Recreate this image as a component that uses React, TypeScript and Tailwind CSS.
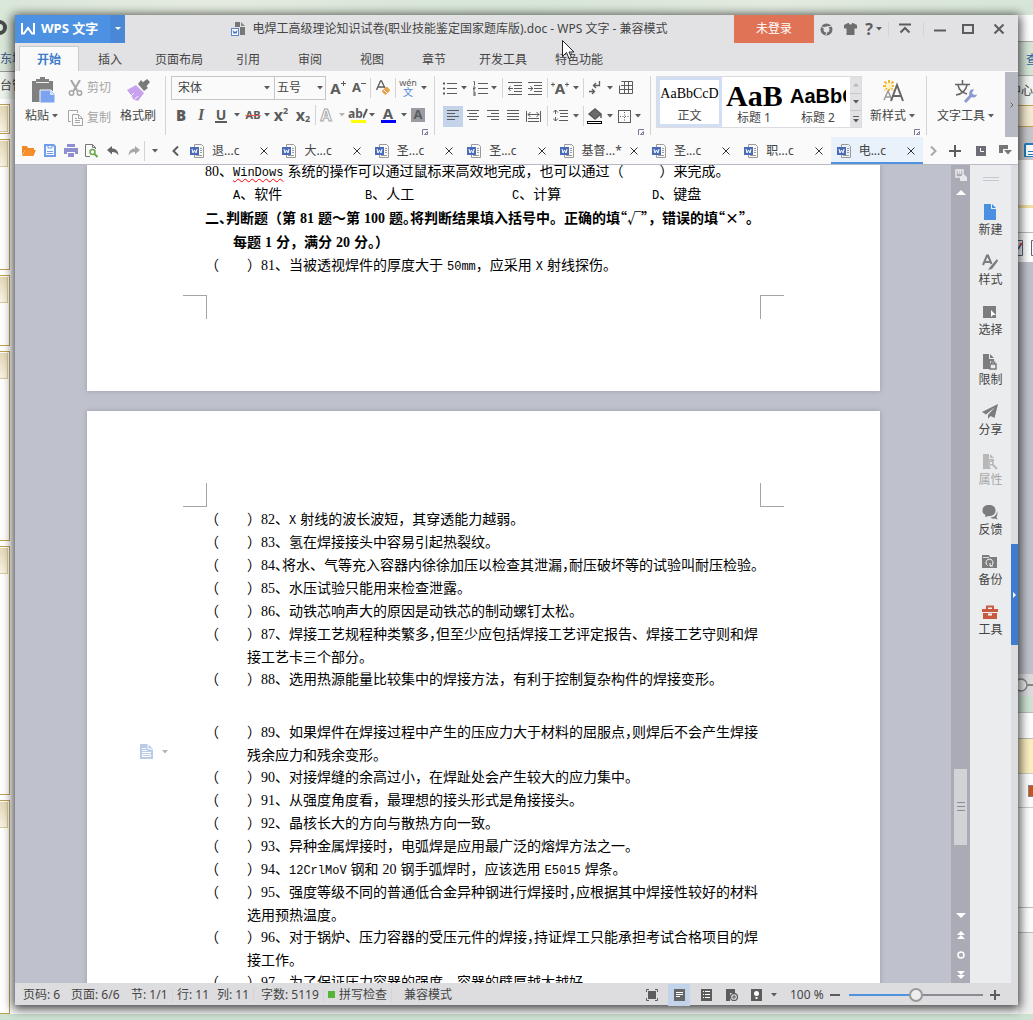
import React from 'react';
import clsx from 'clsx';

const ribbonTabs = ['插入', '页面布局', '引用', '审阅', '视图', '章节', '开发工具', '特色功能'];

const docTabs = [
  { name: '退...c' },
  { name: '大...c' },
  { name: '圣...c' },
  { name: '圣...c' },
  { name: '基督...', dirty: true },
  { name: '圣...c' },
  { name: '职...c' },
  { name: '电...c', active: true },
];

interface Question {
  text: string;
  more?: string;
  gap?: boolean;
  marker?: boolean;
}

// {x} sets a punctuation mark at half width
const questions: Question[] = [
  { text: '82、X射线的波长波短，其穿透能力越弱。' },
  { text: '83、氢在焊接接头中容易引起热裂纹。' },
  { text: '84{、}将水、气等充入容器内徐徐加压以检查其泄漏{，}耐压破坏等的试验叫耐压检验。' },
  { text: '85、水压试验只能用来检查泄露。' },
  { text: '86、动铁芯响声大的原因是动铁芯的制动螺钉太松。' },
  { text: '87、焊接工艺规程种类繁多{，}但至少应包括焊接工艺评定报告、焊接工艺守则和焊', more: '接工艺卡三个部分。' },
  { text: '88、选用热源能量比较集中的焊接方法，有利于控制复杂构件的焊接变形。' },
  { text: '89、如果焊件在焊接过程中产生的压应力大于材料的屈服点{，}则焊后不会产生焊接', more: '残余应力和残余变形。', gap: true, marker: true },
  { text: '90、对接焊缝的余高过小，在焊趾处会产生较大的应力集中。' },
  { text: '91、从强度角度看，最理想的接头形式是角接接头。' },
  { text: '92、晶核长大的方向与散热方向一致。' },
  { text: '93、异种金属焊接时，电弧焊是应用最广泛的熔焊方法之一。' },
  { text: '94、12CrlMoV钢和20钢手弧焊时，应该选用E5015焊条。' },
  { text: '95、强度等级不同的普通低合金异种钢进行焊接时{，}应根据其中焊接性较好的材料', more: '选用预热温度。' },
  { text: '96、对于锅炉、压力容器的受压元件的焊接{，}持证焊工只能承担考试合格项目的焊', more: '接工作。' },
  { text: '97、为了保证压力容器的强度，容器的壁厚越大越好。' },
];

const isHan = (ch?: string) => !!ch && /[\u4e00-\u9fff]/.test(ch);

function Rich({ text }: { text: string }) {
  const parts = text.split(/(\{.\}|[A-Za-z0-9]+)/).filter(Boolean);
  return (
    <>
      {parts.map((p, i) => {
        if (p[0] === '{') {
          return <span key={i} className="[font-feature-settings:'halt']">{p[1]}</span>;
        }
        if (/^[A-Za-z0-9]/.test(p)) {
          return (
            <span
              key={i}
              className={clsx(
                /^\d+$/.test(p) ? "font-['Liberation_Serif',serif]" : "font-['Liberation_Mono',monospace] text-xs",
                isHan(parts[i - 1]?.slice(-1)) && 'ml-1',
                isHan(parts[i + 1]?.[0]) && 'mr-1',
              )}
            >
              {p}
            </span>
          );
        }
        return <React.Fragment key={i}>{p}</React.Fragment>;
      })}
    </>
  );
}

function Blank({ wide }: { wide?: boolean }) {
  return <>（<span className={clsx('inline-block', wide ? 'w-9' : 'w-7')} />）</>;
}

function Caret({ className = 'w-2', light }: { className?: string; light?: boolean }) {
  return (
    <span className={clsx('flex shrink-0 items-center justify-center', className)}>
      <svg width="6" height="4" viewBox="0 0 6 4" fill={light ? '#b5b5b5' : '#5c5c5c'}><path d="M0 0h6L3 3.5z" /></svg>
    </span>
  );
}

function Tool({ label, className = 'w-5', children }: { label: string; className?: string; children: React.ReactNode }) {
  return (
    <button aria-label={label} className={clsx('flex h-5 shrink-0 items-center justify-center text-[#5c5c5c]', className)}>
      {children}
    </button>
  );
}

function Sep({ className = 'h-5' }: { className?: string }) {
  return <span className={clsx('w-px shrink-0 bg-[#d4d4d8]', className)} />;
}

function Icon({ w = 16, h = 16, className, children }: { w?: number; h?: number; className?: string; children: React.ReactNode }) {
  return (
    <svg width={w} height={h} viewBox={`0 0 ${w} ${h}`} fill="none" stroke="currentColor" strokeWidth="1" className={clsx('shrink-0', className)} aria-hidden="true">
      {children}
    </svg>
  );
}

function Launcher() {
  return (
    <button aria-label="更多设置" className="absolute right-1.5 bottom-0 text-[#7a7a9a]">
      <Icon w={6} h={6}><path d="M.5 6V.5H6M2.5 5.5h3v-3z" /></Icon>
    </button>
  );
}

function Lines({ rows }: { rows: [number, number][] }) {
  return (
    <Icon w={14} h={14}>
      {rows.map(([x, w], i) => <path key={i} d={`M${x} ${i * 3 + 1.5}h${w}`} />)}
    </Icon>
  );
}

function DocIcon() {
  return (
    <Icon w={14} h={14}>
      <path d="M4.5 3V.5h7l2 2v11h-9V11" stroke="#9a9a9a" />
      <path d="M10 4.500h2M10 6.500h2M10 8.500h2M6 11.500h6" stroke="#9a9a9a" />
      <rect x="0" y="3" width="9" height="8" fill="#4a6cb8" stroke="none" />
      <path d="M2 5l1 4 1.500-3L6 9l1-4" stroke="#fff" />
    </Icon>
  );
}

function TitleBar() {
  return (
    <header className="flex h-7 shrink-0 items-stretch">
      <button className="flex w-[95px] items-center bg-[#4d91e2] pl-1.5 text-[13px] font-bold text-white">
        <Icon w={14} h={12} className="mr-1.5"><path d="M1 0v10.500h2L7 5l4 5.500h2V0" strokeWidth="2" /></Icon>
        WPS 文字
      </button>
      <button aria-label="应用菜单" className="flex w-[15px] items-center justify-center bg-[#4888d4]">
        <svg width="6" height="4" fill="#fff"><path d="M0 0h6L3 3z" /></svg>
      </button>
      <div className="flex min-w-0 flex-1 items-center justify-center gap-1.5 pl-10">
        <Icon w={15} h={14}>
          <path d="M4 0h5v5h5v8H9V5H4z" fill="#777" stroke="none" />
          <path d="M10 0l4 4h-4z" fill="#888" stroke="none" />
          <rect x=".5" y="6.500" width="7" height="7" fill="#fff" stroke="#5b83c8" />
          <path d="M2 8.500l1 3 1-2 1 2 1-3" stroke="#3e6fc4" />
        </Icon>
        <h1 className="truncate">电焊工高级理论知识试卷(职业技能鉴定国家题库版).doc - WPS 文字 - 兼容模式</h1>
      </div>
      <button className="w-20 shrink-0 bg-[#e07356] text-white">未登录</button>
      <div className="flex shrink-0 items-center text-[#6a6a6a]">
        <Tool label="账号" className="w-6">
          <Icon w={13} h={13}><circle cx="6.500" cy="6.500" r="4.500" stroke="#6e6e6e" strokeWidth="3" /><path d="M1 3.500l5 2M12 3l-5 1M6 12l1-4" stroke="#e2e2e5" /></Icon>
        </Tool>
        <Tool label="皮肤" className="w-6">
          <Icon w={13} h={12}><path d="M4 0h1c0 2 3 2 3 0h1l4 2v3.500h-2.500V12h-8V5.500H0V2z" fill="#6e6e6e" stroke="none" /></Icon>
        </Tool>
        <Tool label="帮助" className="w-6 gap-0.5"><span className="text-base font-bold">?</span><Caret /></Tool>
        <Sep className="ml-0.5 h-3.5 bg-[#b0b0b4]" />
        <Tool label="折叠功能区" className="w-8"><Icon w={12} h={12}><path d="M0 1.500h12M1.500 9.500L6 5l4.500 4.500" strokeWidth="2" /></Icon></Tool>
        <Sep className="ml-0.5 h-3.5 bg-[#b0b0b4]" />
        <Tool label="最小化" className="w-8"><Icon w={12} h={12}><path d="M0 7.500h12" strokeWidth="2" /></Icon></Tool>
        <Tool label="最大化" className="w-6"><Icon w={12} h={10}><rect x="1" y="1" width="10" height="8" strokeWidth="2" /></Icon></Tool>
        <Tool label="关闭" className="w-[38px]"><Icon w={10} h={10}><path d="M.5.5l9 9M9.500.5l-9 9" strokeWidth="2" /></Icon></Tool>
      </div>
    </header>
  );
}

function RibbonTabs() {
  return (
    <nav className="flex h-7 shrink-0 items-end pl-1">
      <button className="h-[25px] w-[60px] border border-b-0 border-[#c9cacd] bg-[#fafafa] pt-0.5 font-bold text-[#3c7cc8]">开始</button>
      {ribbonTabs.map((t) => (
        <button key={t} className={clsx('h-[25px] shrink-0 pt-0.5', t.length > 2 ? 'w-[76px]' : 'w-[62px]')}>{t}</button>
      ))}
    </nav>
  );
}

function ClipboardGroup() {
  return (
    <section className="flex h-full w-[151px] shrink-0 border-r border-[#d4d4d8] pl-[9px]">
      <button className="flex w-9 flex-col items-center">
        <Icon w={26} h={28}>
          <path d="M3 5h4V3h4V1h5v2h4v2h4v10H12v11H3z" fill="#808080" stroke="none" />
          <path d="M7 6.500h13" stroke="#eee" />
          <path d="M11 14h11l4 4v9H11z" fill="#7ba3ee" stroke="#fafafa" />
          <path d="M21 14v5h5" fill="#d5e2fb" stroke="none" />
        </Icon>
        <span className="mt-1 flex items-center gap-0.5 whitespace-nowrap leading-4">粘贴<Caret /></span>
      </button>
      <div className="ml-2 flex w-12 flex-col text-[#a5a5a5]">
        <button className="flex h-6 items-center gap-1">
          <Icon w={15} h={16}><path d="M3 0l6.500 11M12 0L5.500 11" strokeWidth="2" /><circle cx="3.500" cy="13" r="2.200" strokeWidth="1.500" /><circle cx="11.500" cy="13" r="2.200" strokeWidth="1.500" /></Icon>
          <span className="whitespace-nowrap">剪切</span>
        </button>
        <button className="mt-1 flex h-7 items-center gap-1">
          <Icon w={15} h={16}><path d="M3 11.500H.5V.5h9V3M4.500 4.500h6l4 4v7h-10zM10.500 4.500v4h4M7 8.500h2M7 10.500h5M7 12.500h5" /></Icon>
          <span className="whitespace-nowrap">复制</span>
        </button>
      </div>
      <button className="ml-0.5 flex w-10 flex-col items-center">
        <Icon w={24} h={28}>
          <path d="M16 7l5-4 3 3-5 6z" fill="#777" stroke="none" />
          <path d="M12 8l3-4 7 8-4 3z" fill="#7b7b7b" stroke="none" />
          <path d="M1 14l9-5 8 8-6 8-3-1-2-1-2-4z" fill="#c9a2ef" stroke="none" />
          <path d="M5 20l3-3M9 23l3-3" stroke="#fafafa" />
        </Icon>
        <span className="mt-1 whitespace-nowrap leading-4">格式刷</span>
      </button>
    </section>
  );
}

function FontGroup() {
  return (
    <section className="relative flex h-full w-[269px] shrink-0 flex-col border-r border-[#d4d4d8] pl-[5px]">
      <div className="flex h-6 items-center">
        <span className="relative flex h-6 w-[104px] items-center border border-[#c6c6ca]">
          <select aria-label="字体" className="h-full w-full appearance-none bg-transparent pl-1.5 outline-none"><option>宋体</option></select>
          <Caret className="absolute right-1" />
        </span>
        <span className="relative -ml-px flex h-6 w-[52px] items-center border border-[#c6c6ca]">
          <select aria-label="字号" className="h-full w-full appearance-none bg-transparent pl-0.5 outline-none"><option>五号</option></select>
          <Caret className="absolute right-0.5" />
        </span>
        <Tool label="增大字号" className="ml-0.5 w-5"><b className="text-[15px]">A</b><Icon w={5} h={14}><path d="M0 2.500h5M2.500 0v5" /></Icon></Tool>
        <Tool label="减小字号" className="w-[22px]"><b className="text-[13px]">A</b><Icon w={5} h={14}><path d="M0 2.500h5" /></Icon></Tool>
        <Sep />
        <Tool label="清除格式" className="w-6">
          <Icon w={15} h={16}><path d="M.5 10L4.500 1h1L9 8M2 7h6" strokeWidth="1.300" /><rect x="6.500" y="8" width="7" height="5.500" rx="1" transform="rotate(-45 10 10.800)" fill="#e9a24c" stroke="none" /><path d="M7.500 9.500l4 4" stroke="#fff" /></Icon>
        </Tool>
        <Sep />
        <Tool label="拼音指南" className="w-6 flex-col"><span className="text-[9px] leading-[9px]">wén</span><span className="text-[10px] leading-[11px] text-[#4a86d8]">文</span></Tool>
        <Caret />
      </div>
      <div className="mt-[5px] flex h-5 items-center">
        <Tool label="加粗"><b className="text-[15px] font-black">B</b></Tool>
        <Tool label="倾斜"><i className="font-['Liberation_Serif',serif] text-base font-bold">I</i></Tool>
        <Tool label="下划线"><span className="border-b-2 border-[#5c5c5c] px-px text-sm leading-[13px] font-bold">U</span></Tool>
        <Caret className="w-3" />
        <Tool label="删除线"><span className="text-[11px] font-bold line-through decoration-[#e25b4a] decoration-1">AB</span></Tool>
        <Caret />
        <Tool label="上标"><b className="text-base">x</b><span className="-mt-2 text-[9px] font-bold">2</span></Tool>
        <Tool label="下标" className="w-6"><b className="text-base">x</b><span className="mt-2 text-[9px] font-bold">2</span></Tool>
        <Sep />
        <Tool label="文字效果"><b className="text-base text-white [-webkit-text-stroke:1px_#a9a9a9]">A</b></Tool>
        <Caret className="w-3" light />
        <Tool label="突出显示">
          <span className="flex flex-col items-center">
            <span className="flex h-3 items-end text-xs leading-3 font-bold">ab<Icon w={5} h={12}><path d="M0 10l4-9" strokeWidth="2" /></Icon></span>
            <span className="h-[3px] w-[15px] bg-[#ffff00]" />
          </span>
        </Tool>
        <Caret />
        <Tool label="字体颜色" className="w-6">
          <span className="flex flex-col items-center">
            <b className="text-[15px] leading-[13px]">A</b>
            <span className="h-[3px] w-[15px] bg-[#0000ff]" />
          </span>
        </Tool>
        <Caret />
        <Tool label="字符底纹"><b className="flex size-3.5 items-center justify-center bg-[#9c9ca4] text-[13px]">A</b></Tool>
      </div>
      <Launcher />
    </section>
  );
}

function ParagraphGroup() {
  return (
    <section className="relative flex h-full w-[216px] shrink-0 flex-col border-r border-[#d4d4d8] pl-[5px]">
      <div className="flex h-6 items-center">
        <Tool label="项目符号"><Icon w={14} h={14}><path d="M4 2.500h10M4 7.500h10M4 12.500h10M0 2.500h2M0 7.500h2M0 12.500h2" /><path d="M1 1.500v2M1 6.500v2M1 11.500v2" strokeWidth="2" /></Icon></Tool>
        <Caret />
        <Tool label="编号" className="ml-0.5 w-5"><Icon w={15} h={15}><path d="M5 2.500h10M5 7.500h10M5 12.500h10M.5.5h1v4M0 6h2v1.500H0V9h2M0 11h2v4H0M0 13h2" /></Icon></Tool>
        <Caret />
        <Sep className="ml-1 h-5" />
        <Tool label="减少缩进" className="w-6"><Icon w={14} h={14}><path d="M0 1.500h14M6 4.500h8M6 7.500h8M6 10.500h8M0 13.500h14M0 7.500h5M2.500 5L.5 7.500l2 2.500" /></Icon></Tool>
        <Tool label="增加缩进" className="w-4"><Icon w={14} h={14}><path d="M0 1.500h14M6 4.500h8M6 7.500h8M6 10.500h8M0 13.500h14M0 7.500h5M2.500 5l2 2.500-2 2.500" /></Icon></Tool>
        <Sep className="ml-1 h-5" />
        <Tool label="中文版式" className="w-6"><Icon w={4} h={14}><path d="M0 3.500h4M2 1.500v4" /></Icon><b className="text-[15px]">A</b><Icon w={4} h={14}><path d="M0 3.500h4M2 1.500v4" /></Icon></Tool>
        <Caret />
        <Sep className="ml-[3px] h-5" />
        <Tool label="显示段落标记" className="w-[22px]"><Icon w={12} h={14}><path d="M10.500 0v4.500H5M7 2L4.500 4.500 7 7M0 10.500h5M3 8l2.500 2.500L3 13" strokeWidth="1.300" /></Icon></Tool>
        <Caret />
        <Tool label="表格" className="w-6"><Icon w={14} h={14}><path d="M2.500.5h11v12H.5v-8M5.500 0v13M9.500 0v13M2 4.500h12M0 8.500h14" /></Icon></Tool>
      </div>
      <div className="mt-1.5 flex h-5 items-center">
        <button aria-label="左对齐" className="ml-[3px] flex h-[21px] w-5 items-center justify-center bg-[#c3d3ea] text-[#5c5c5c]"><Lines rows={[[1, 12], [1, 8], [1, 12], [1, 8]]} /></button>
        <Tool label="居中对齐"><Lines rows={[[1, 12], [3, 8], [1, 12], [3, 8]]} /></Tool>
        <Tool label="右对齐"><Lines rows={[[1, 12], [5, 8], [1, 12], [5, 8]]} /></Tool>
        <Tool label="两端对齐"><Lines rows={[[1, 12], [1, 12], [1, 12], [1, 12]]} /></Tool>
        <Tool label="分散对齐"><Icon w={15} h={13}><path d="M.5 1v11M14.500 1v11M2 4.500h11M4.500 2L2 4.500 4.500 7M10.500 2L13 4.500 10.500 7M2 8.500h11M2 11.500h11" /></Icon></Tool>
        <Sep className="ml-1 h-5" />
        <Tool label="行距" className="w-6"><Icon w={15} h={14}><path d="M6 1.500h9M7 4.500h8M7 7.500h8M6 11.500h9M2.500 1v4M2.500 8v4M0 3.500L2.500 1 5 3.500M0 9.500L2.500 12 5 9.500" /></Icon></Tool>
        <Caret />
        <Sep className="ml-[3px] h-5" />
        <Tool label="底纹颜色" className="w-[22px]"><Icon w={16} h={16}><path d="M2 6l6-5 6 5-6 5zM14 6v4" fill="#6b6b6b" strokeWidth="1.500" /><rect x=".5" y="13.500" width="14" height="2" stroke="#000" fill="#fff" /></Icon></Tool>
        <Caret />
        <Tool label="边框"><Icon w={13} h={13}><rect x=".5" y=".5" width="12" height="12" /><path d="M6.500 2v9M2 6.500h9" strokeDasharray="1 1.500" /></Icon></Tool>
        <Caret />
      </div>
      <Launcher />
    </section>
  );
}

function StylesGroup() {
  return (
    <section className="relative flex h-full w-[276px] shrink-0 border-r border-[#d4d4d8] pl-[5px]">
      <div className="flex h-[52px] w-[206px] border border-[#dcdce0] bg-white">
        <button className="w-[65px] border-3 border-[#d2def3]">
          <span className="block h-7 overflow-hidden font-['Liberation_Serif',serif] text-sm leading-7 text-black">AaBbCcD</span>
          <span className="block leading-4">正文</span>
        </button>
        <button className="w-16 px-1">
          <span className="block h-8 overflow-hidden text-left font-['Liberation_Serif',serif] text-[30px] leading-9 font-bold text-black">AaBb</span>
          <span className="block leading-4">标题 1</span>
        </button>
        <button className="w-16 px-1">
          <span className="block h-8 overflow-hidden text-left font-['Liberation_Sans',sans-serif] text-xl leading-9 font-bold text-black">AaBbC</span>
          <span className="block leading-4">标题 2</span>
        </button>
        <div className="flex flex-1 flex-col divide-y divide-[#c8c8cc] bg-[#e2e2e5]">
          <button aria-label="上一行样式" className="flex flex-1 items-center justify-center"><svg width="6" height="4" fill="#b8b8b8"><path d="M0 3.500h6L3 0z" /></svg></button>
          <button aria-label="下一行样式" className="flex flex-1 items-center justify-center"><Caret /></button>
          <button aria-label="全部样式" className="flex flex-1 flex-col items-center justify-center gap-0.5"><span className="h-px w-1.5 bg-[#5c5c5c]" /><Caret /></button>
        </div>
      </div>
      <button className="ml-2 flex flex-col items-center">
        <span className="flex h-8 items-center text-[#666]">
          <Icon w={26} h={26}>
            <path d="M9 1v12M3 7h12M4.500 2.500l9 9M13.500 2.500l-9 9" stroke="#f2b632" strokeWidth="2" strokeDasharray="3 1" />
            <circle cx="9" cy="7" r="3" fill="#fff4c2" stroke="none" />
            <path d="M4 21l4-9 4 9M5.500 18h5" stroke="#9b9b9b" strokeWidth="1.500" />
            <path d="M11 22l6-16 6 16M13.500 17h7" strokeWidth="2" />
          </Icon>
        </span>
        <span className="flex items-center gap-0.5 leading-4">新样式<Caret /></span>
      </button>
      <Launcher />
    </section>
  );
}

function Ribbon() {
  return (
    <div className="flex h-[66px] shrink-0 items-stretch bg-[#fafafa]">
      <div className="flex min-w-0 flex-1 overflow-hidden pt-[5px] pb-0.5">
        <ClipboardGroup />
        <FontGroup />
        <ParagraphGroup />
        <StylesGroup />
        <button className="flex flex-1 flex-col items-center">
          <span className="flex h-8 items-center text-[#666]">
            <Icon w={24} h={24}>
              <path d="M1 4.500h15M8.500 0v4M13 5c-1 5-5 9-11 10M4 5c1 5 5 8 9 9" strokeWidth="1.500" />
              <path d="M11 22l6-6.500" stroke="#8c9bd0" strokeWidth="3" />
              <path d="M20 9.500a4 4 0 1 0 3 5l-3 .5-2-2z" fill="#8c9bd0" stroke="none" />
            </Icon>
          </span>
          <span className="flex items-center gap-0.5 whitespace-nowrap leading-4">文字工具<Caret /></span>
        </button>
      </div>
      <button aria-label="向右滚动" className="mt-px flex w-[13px] shrink-0 items-center justify-center bg-[#b7b9c3] text-[#666]">
        <Icon w={4} h={6}><path d="M.5.5L3 3 .5 5.500" /></Icon>
      </button>
    </div>
  );
}

function DocumentBar() {
  return (
    <div className="flex h-7 shrink-0 items-stretch border-b border-[#b9bac6] bg-[#fafafa]">
      <div className="flex w-[169px] shrink-0 items-center pl-[3px]">
        <Tool label="打开" className="w-[21px]"><Icon w={14} h={12}><path d="M0 1h5l1 2h6v2H3l-3 5z" fill="#f08a28" stroke="none" /><path d="M3 5h11l-2.500 6H0z" fill="#f5902c" stroke="none" /></Icon></Tool>
        <Tool label="保存" className="w-[21px] text-[#6f9ceb]"><Icon w={12} h={13}><path d="M1 1h8.500L11 2.500V12H1z" strokeWidth="2" /><path d="M4 1v3h4V1M3 7.500h6M3 9.500h6" /></Icon></Tool>
        <Tool label="打印" className="w-[21px] text-[#8f8fd0]"><Icon w={14} h={13}><path d="M3 0h8v3H3zM0 4h14v6h-3V8H3v2H0zM4 9h6v4H4z" fill="currentColor" stroke="none" /></Icon></Tool>
        <Tool label="打印预览" className="w-[21px]"><Icon w={13} h={14}><path d="M5 12.500H.5V.5h7l3 3V5M7.500.5v3h3" stroke="#777" /><circle cx="7.500" cy="8" r="2.500" stroke="#6aa84f" strokeWidth="1.500" /><path d="M9.500 10l3 3" stroke="#6aa84f" strokeWidth="2" /></Icon></Tool>
        <Tool label="撤销" className="w-[21px]"><Icon w={12} h={10}><path d="M0 4l5-4v2.500c4 0 6 2 6.500 7C10 7 8 6 5 6v2.500z" fill="#666" stroke="none" /></Icon></Tool>
        <Tool label="恢复" className="w-[21px]"><Icon w={12} h={10}><path d="M12 4L7 0v2.500C3 2.500 1 4.500.5 9.500 2 7 4 6 7 6v2.500z" fill="#a8a8a8" stroke="none" /></Icon></Tool>
        <Sep />
        <Caret className="w-5" />
        <Tool label="向左滚动标签"><Icon w={7} h={10}><path d="M6 .5L1.500 5 6 9.500" strokeWidth="2" /></Icon></Tool>
      </div>
      <div role="tablist" className="flex min-w-0 flex-1">
        {docTabs.map((t, i) => (
          <div
            key={i}
            className={clsx('flex min-w-0 flex-1 items-center border-b-2 pt-0.5 pl-1.5', t.active ? 'border-[#4f93df] bg-[#e9f1fb]' : 'border-transparent')}
          >
            <button role="tab" aria-selected={!!t.active} className="flex min-w-0 flex-1 items-center gap-2 whitespace-nowrap">
              <DocIcon />
              {t.name}
            </button>
            {t.dirty && <span>*</span>}
            <button aria-label="关闭标签" className="mx-1 flex size-4 shrink-0 items-center justify-center text-[#333]"><Icon w={8} h={8}><path d="M.5.5l7 7M7.500.5l-7 7" /></Icon></button>
          </div>
        ))}
      </div>
      <div className="flex w-[95px] shrink-0 items-center">
        <Tool label="向右滚动标签"><Icon w={7} h={10} className="text-[#a8a8a8]"><path d="M1 .5L5.500 5 1 9.500" strokeWidth="2" /></Icon></Tool>
        <Tool label="新建标签" className="w-6"><Icon w={12} h={12}><path d="M0 6h12M6 0v12" strokeWidth="2" /></Icon></Tool>
        <Tool label="历史" className="w-7"><Icon w={10} h={10}><rect width="10" height="10" fill="#6d6d78" stroke="none" /><path d="M4.500 2v3.500H8" stroke="#fff" /></Icon></Tool>
        <Tool label="窗口列表" className="w-5"><Icon w={13} h={11}><path d="M0 0h9v4H4v4H0zM5 5h8L9 9.500z" fill="#777" stroke="none" /></Icon></Tool>
      </div>
    </div>
  );
}

function CropMarks({ top }: { top?: boolean }) {
  return (
    <div className="flex justify-between px-24">
      <span className={clsx('size-6 border-r border-[#a5a5a5]', top ? 'border-b' : 'border-t')} />
      <span className={clsx('size-6 border-l border-[#a5a5a5]', top ? 'border-b' : 'border-t')} />
    </div>
  );
}

function Workspace() {
  return (
    <main className="flex min-w-0 flex-1 flex-col items-center gap-5 overflow-hidden bg-[#bfc1cc] pl-px font-['Noto_Sans_CJK_SC',sans-serif] text-sm text-black">
      <article className="h-[226px] w-[793px] shrink-0 bg-white whitespace-nowrap shadow-[0_0_5px_#9a9cab]">
        <div className="-mt-1.5 px-[118px] leading-[23px]">
          <p className="h-[23px]">
            <span className="font-['Liberation_Serif',serif]">80</span>、
            <span className="mr-1 font-['Liberation_Mono',monospace] text-xs underline decoration-[#ff0000] decoration-wavy decoration-1 underline-offset-2">WinDows</span>
            系统的操作可以通过鼠标来高效地完成，也可以通过<Blank wide />来完成。
          </p>
          <p className="grid h-[23px] grid-cols-[132px_147px_140px_auto] pl-7">
            <span><Rich text="A、软件" /></span>
            <span><Rich text="B、人工" /></span>
            <span><Rich text="C、计算" /></span>
            <span><Rich text="D、键盘" /></span>
          </p>
          <h2 className="leading-6 font-bold">
            <span className="block h-6"><Rich text="二{、}判断题（第81题～第100题{。}将判断结果填入括号中。正确的填{“}√{”}，错误的填{“}×{”}。" /></span>
            <span className="block h-6 pl-7"><Rich text="每题1分，满分20分。）" /></span>
          </h2>
          <p className="h-[23px]"><Blank /><Rich text="81、当被透视焊件的厚度大于50mm，应采用X射线探伤。" /></p>
        </div>
        <div className="pt-[19px]"><CropMarks /></div>
      </article>
      <article className="h-[1123px] w-[793px] shrink-0 bg-white pt-[72px] whitespace-nowrap shadow-[0_0_5px_#9a9cab]">
        <CropMarks top />
        <div className="px-[118px]">
          {questions.map((q) => (
            <div key={q.text} className={clsx('relative', q.gap && 'mt-[30px]')}>
              <p className="h-[23px] leading-[23px]"><Blank /><Rich text={q.text} /></p>
              {q.more && <p className="h-[22px] pl-[42px] leading-[22px]"><Rich text={q.more} /></p>}
              {q.marker && (
                <button aria-label="段落布局" className="absolute bottom-1.5 -left-[65px] flex items-center gap-1">
                  <Icon w={13} h={15}><path d="M0 0h8l5 5v10H0z" fill="#b9cbe9" stroke="none" /><path d="M8 0v5h5M2 4.500h4M2 6.500h5M2 8.500h9M2.500 10.500h8v2h-8z" stroke="#fff" /></Icon>
                  <Caret className="w-4" light />
                </button>
              )}
            </div>
          ))}
        </div>
      </article>
    </main>
  );
}

function ScrollBar() {
  return (
    <div className="flex w-[19px] shrink-0 flex-col items-center bg-[#aaabb5] pt-1 text-white">
      <Icon w={12} h={12} className="text-[#e8e8ec]"><path d="M1 1h7v7H1zM3.500 1v4M5.500 1v4" strokeWidth="1.500" /><path d="M5 8l3.500-3L12 8v4H5z" fill="#e8e8ec" stroke="none" /></Icon>
      <button aria-label="向上滚动" className="mt-2"><Icon w={10} h={6}><path d="M0 6l5-5 5 5z" fill="#fff" stroke="none" /></Icon></button>
      <div className="flex w-[13px] flex-1 flex-col pt-1.5">
        <span className="flex-[567]" />
        <span className="flex h-[76px] flex-col items-center justify-center gap-[3px] bg-[#d2d3d7]">
          <span className="h-px w-2 bg-[#8a8b93]" />
          <span className="h-px w-2 bg-[#8a8b93]" />
          <span className="h-px w-2 bg-[#8a8b93]" />
        </span>
        <span className="flex-[68]" />
      </div>
      <div className="flex flex-col items-center gap-3 pb-1">
        <button aria-label="向下滚动"><Icon w={10} h={6}><path d="M0 0h10L5 5z" fill="#fff" stroke="none" /></Icon></button>
        <button aria-label="上一页"><Icon w={8} h={8}><path d="M0 4l4-4 4 4zM0 8l4-4 4 4z" fill="#fff" stroke="none" /></Icon></button>
        <button aria-label="选择浏览对象"><Icon w={8} h={8}><circle cx="4" cy="4" r="3" strokeWidth="1.500" /></Icon></button>
        <button aria-label="下一页"><Icon w={8} h={8}><path d="M0 0h8L4 4zM0 4h8L4 8z" fill="#fff" stroke="none" /></Icon></button>
      </div>
    </div>
  );
}

const sideItems = [
  { label: '新建', color: 'text-[#4a90e2]', icon: <path d="M2 0h7v5h5v11H2zM10 0l4 4h-4z" fill="currentColor" stroke="none" /> },
  { label: '样式', icon: <><path d="M1 11L5 1.500h1L9.500 10M2.500 8h6" strokeWidth="2" /><path d="M15 5l-7 8-2 3 4-1 6-8z" fill="currentColor" stroke="none" /></> },
  { label: '选择', icon: <><path d="M1 2h13v12H1z" fill="currentColor" stroke="none" /><path d="M9 6v7l2-2h3z" fill="#fff" stroke="none" /></> },
  { label: '限制', icon: <><path d="M1 0h6v5h5v2H8v8H1zM8 0l4 4H8z" fill="currentColor" stroke="none" /><path d="M8 10h6v5H8zM9.500 10V8h3v2" strokeWidth="1.500" /></> },
  { label: '分享', icon: <path d="M16 0L0 8l4 2.500L13 3l-7 8v4l2.500-3 4 2z" fill="currentColor" stroke="none" /> },
  { label: '属性', off: true, icon: <><path d="M1 0h6v5h5v3L8 6 6 9l3 6H1zM8 0l4 4H8z" fill="currentColor" stroke="none" /><path d="M10 10l5 5" strokeWidth="2" /><circle cx="9" cy="9" r="2" strokeWidth="1.500" /></> },
  { label: '反馈', icon: <><path d="M7 1c4 0 6.500 2 6.500 5.500S11 12 7 12l-4 1 .5-2C1 10 .5 8 .5 6.500.5 3 3 1 7 1z" fill="currentColor" stroke="none" /><path d="M15 7c1 3 0 5-.5 6l1 2.500-3-1c-2 .5-3 0-4-1 4 0 6.500-3 6.500-6.500z" fill="currentColor" stroke="none" /></> },
  { label: '备份', icon: <><path d="M0 1h7l1 2h7v11H0z" fill="currentColor" stroke="none" /><path d="M1 3.500h6" stroke="#ddd" /><path d="M5.500 11.500a3.500 3.500 0 1 1 4 0M8 9v3h3" stroke="#fff" /></> },
  { label: '工具', color: 'text-[#c85a41]', icon: <><path d="M0 5h16v3H0zM1 9h14v6H1z" fill="currentColor" stroke="none" /><path d="M5 5V2.500h6V5" strokeWidth="2" /><path d="M6 10.500h4" stroke="#fff" strokeWidth="2" /></> },
];

function SidePanel() {
  return (
    <>
      <aside className="flex w-[41px] shrink-0 flex-col items-center bg-[#ebecee]">
        <span className="mt-3 mb-[7px] h-1 w-4 shrink-0 border-y border-[#c5c8d2]" />
        {sideItems.map((s) => (
          <button key={s.label} className={clsx('mt-4 flex h-[34px] shrink-0 flex-col items-center justify-between', s.off && 'text-[#a8a8a8]')}>
            <Icon className={s.color ?? (s.off ? 'text-[#b8b8b8]' : 'text-[#7c7c7c]')}>{s.icon}</Icon>
            <span className="leading-4">{s.label}</span>
          </button>
        ))}
      </aside>
      <div className="flex w-[7px] shrink-0 flex-col bg-[#dcdde0]">
        <span className="flex-[379]" />
        <button aria-label="展开侧栏" className="flex h-[101px] items-center justify-center bg-[#3f7ccf]"><Icon w={3} h={6}><path d="M0 0l3 3-3 3z" fill="#fff" stroke="none" /></Icon></button>
        <span className="flex-[338]" />
      </div>
    </>
  );
}

function StatusBar() {
  return (
    <footer className="flex h-[22px] shrink-0 items-center bg-[#dddde0] pt-px pr-[17px] pl-2 whitespace-nowrap">
      <span className="w-12">页码: 6</span>
      <span className="w-[60px]">页面: 6/6</span>
      <span className="w-[41px]">节: 1/1</span>
      <Sep className="h-3.5 bg-[#aaa]" />
      <span className="w-11 pl-1">行: 11</span>
      <span className="w-9">列: 11</span>
      <Sep className="h-3.5 bg-[#aaa]" />
      <span className="w-[69px] pl-[7px]">字数: 5119</span>
      <Sep className="h-3.5 bg-[#aaa]" />
      <button className="flex w-[67px] items-center gap-1 pl-1"><span className="size-[7px] bg-[#54b435]" />拼写检查</button>
      <Sep className="h-3.5 bg-[#aaa]" />
      <span className="flex-1 pl-3">兼容模式</span>
      <Tool label="全屏显示" className="w-8"><Icon w={12} h={12}><path d="M.5 3V.5H3M9 .5h2.500V3M11.500 9v2.500H9M3 11.500H.5V9" /><path d="M2 2h8v8H2z" fill="currentColor" stroke="none" /></Icon></Tool>
      <button aria-label="页面视图" className="flex h-[22px] w-[22px] items-center justify-center bg-[#c3d3ea] text-[#666]"><Icon w={11} h={12}><path d="M0 0h11v12H0z" fill="currentColor" stroke="none" /><path d="M2 3.500h7M2 5.500h7M2 7.500h4" stroke="#fff" /></Icon></button>
      <Tool label="大纲视图" className="w-8"><Icon w={11} h={12}><path d="M0 0h11v12H0z" fill="currentColor" stroke="none" /><path d="M2 2.500h1M4 2.500h5M2 5.500h1M4 5.500h5M2 8.500h1M4 8.500h5" stroke="#fff" /></Icon></Tool>
      <Tool label="Web版式"><Icon w={12} h={12}><path d="M0 0h9v4H4v8H0z" fill="currentColor" stroke="none" /><circle cx="8" cy="8" r="3.500" strokeWidth="1.300" /><path d="M6 8h4M8 6v4" /></Icon></Tool>
      <Tool label="护眼模式" className="w-7"><Icon w={11} h={12}><path d="M0 0h11v12H0z" fill="currentColor" stroke="none" /><circle cx="5.500" cy="4.500" r="2.500" fill="#fff" stroke="none" /><path d="M4.500 8.500h2M4.500 9.500h2" stroke="#fff" /></Icon></Tool>
      <Caret />
      <span className="w-[49px] pl-3">100 %</span>
      <Tool label="缩小" className="w-4"><Icon w={10} h={10}><path d="M0 5h10" strokeWidth="2" /></Icon></Tool>
      <input
        type="range"
        aria-label="显示比例"
        min={0}
        max={100}
        defaultValue={50}
        className="mx-1.5 h-3.5 w-[134px] appearance-none bg-[linear-gradient(90deg,#4f93df_50%,#8b8b93_50%)] bg-[length:100%_2px] bg-center bg-no-repeat [&::-webkit-slider-thumb]:size-3.5 [&::-webkit-slider-thumb]:appearance-none [&::-webkit-slider-thumb]:rounded-full [&::-webkit-slider-thumb]:border-2 [&::-webkit-slider-thumb]:border-[#999] [&::-webkit-slider-thumb]:bg-[#eee]"
      />
      <Tool label="放大" className="w-3"><Icon w={10} h={10}><path d="M0 5h10M5 0v10" strokeWidth="2" /></Icon></Tool>
    </footer>
  );
}

function LeftBackdrop() {
  return (
    <div className="flex w-[15px] shrink-0 flex-col overflow-hidden whitespace-nowrap">
      <span className="mt-5 -ml-2.5 h-[15px] w-[17px] shrink-0 rounded-full border-4 border-[#4a4a4a]" />
      <span className="mt-4 h-5 shrink-0 text-[#3a5a8c]">东城</span>
      <span className="h-7 shrink-0 border-t border-[#999] bg-[#eef3ee] pt-1.5">台管</span>
      <div className="flex flex-1 flex-col gap-[5px] bg-white pt-[5px]">
        {['h-[30px]', 'h-[131px]', 'h-[71px]', 'h-[190px]', 'h-[249px]', 'flex-1'].map((h, i) => (
          <span key={i} className={clsx('w-2.5 shrink-0 border-y border-r border-[#c0a050] pt-px pr-px', h)}>
            <span className="block h-[26px] border-r border-b border-[#d8c8a0] bg-linear-to-b from-[#e5d9b8] to-[#f8f2e2]" />
          </span>
        ))}
      </div>
      <span className="h-1.5 shrink-0" />
    </div>
  );
}

function RightBackdrop() {
  return (
    <div className="flex w-[15px] shrink-0 flex-col overflow-hidden whitespace-nowrap">
      <span className="mt-[15px] h-[27px] shrink-0 border-b border-[#aaa] bg-white" />
      <span className="h-[33px] shrink-0 pt-2.5 pl-2 text-[#2f5f9c]">查看</span>
      <span className="flex h-[30px] shrink-0 items-center justify-end border-t border-[#aaa] bg-[#f3f7f3]">中心</span>
      <span className="h-[22px] shrink-0 border-y border-[#c0a050] bg-[#f3ead0]" />
      <span className="h-[33px] shrink-0 bg-[#c8c8cc] pt-4 pl-1.5 text-[#1f7fc0]"><Icon w={14} h={14}><rect x="1" y="1" width="13" height="13" rx="1" strokeWidth="2" fill="#fff" /><path d="M4 8.500h9M4 11.500h9" /></Icon></span>
      <span className="h-[48px] shrink-0 border-b-3 border-[#f2e2a0] bg-white" />
      <span className="h-[25px] shrink-0 border-b border-[#bbb] bg-white" />
      <span className="flex h-[29px] shrink-0 items-center bg-white text-[#567]"><Icon w={15} h={16}><path d="M0 .5h4.500v15H0M15 .5h-1.500v15H15" /><path d="M0 9l2-3" stroke="#3a6fc0" strokeWidth="2" /><path d="M2 6l1.500-3" stroke="#c33" strokeWidth="2" /></Icon></span>
      <span className="h-[412px] shrink-0 bg-[#bfc1cc]" />
      <span className="flex h-[22px] shrink-0 items-center bg-[#dddde0] text-[#888]"><Icon w={15} h={14}><circle cx="3" cy="7" r="6" strokeWidth="1.500" fill="#eee" /><path d="M9 7h6" strokeWidth="2" /></Icon></span>
      <span className="mt-4 h-[27px] shrink-0 border-y border-[#bbb] bg-white" />
      <span className="h-[34px] shrink-0 bg-[#fcefc0]" />
      <span className="flex h-[35px] shrink-0 items-center border-y border-[#ccc] bg-white pl-2.5"><span className="size-3 shrink-0 border border-[#888] bg-[#c8561c]" /></span>
      <span className="h-[100px] shrink-0 border-b border-[#bbb] bg-white" />
      <span className="h-[25px] shrink-0 border-b border-[#bbb] bg-white" />
      <span className="flex-1 bg-[#f0f0f0]" />
      <span className="h-1.5 shrink-0" />
    </div>
  );
}

export default function App() {
  return (
    <div className="flex h-screen overflow-hidden bg-[#cfe3d3] bg-[radial-gradient(circle_at_20%_0,#e6ece0_0,transparent_30%),radial-gradient(circle_at_75%_0,#e4ebe0_0,transparent_30%)] font-['Noto_Sans','Noto_Sans_CJK_SC',sans-serif] text-xs text-[#444]">
      <LeftBackdrop />
      <div className="relative flex min-w-0 flex-1 flex-col pt-[15px]">
        <div className="relative z-10 flex min-h-0 flex-1 flex-col bg-[#e2e2e5] shadow-[0_2px_10px_2px_rgba(0,0,0,0.75)]">
          <TitleBar />
          <RibbonTabs />
          <Ribbon />
          <DocumentBar />
          <div className="flex min-h-0 flex-1">
            <Workspace />
            <ScrollBar />
            <SidePanel />
          </div>
          <StatusBar />
          <svg width="13" height="20" viewBox="0 0 13 20" className="pointer-events-none absolute top-[25px] left-[547px]" fill="#fff" stroke="#222">
            <path d="M.5.500v16l4-4 2.500 6 2.500-1-2.500-5.500h5z" />
          </svg>
        </div>
        <div className="h-[15px] shrink-0 bg-linear-to-b from-white from-60% to-transparent to-60%" />
      </div>
      <RightBackdrop />
    </div>
  );
}
